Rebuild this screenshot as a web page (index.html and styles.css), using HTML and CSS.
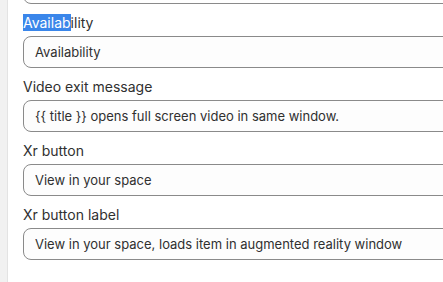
FILE: index.html
```html
<!DOCTYPE html>
<html lang="en">

<head>
    <meta charset="UTF-8">
    <title>Metafields</title>

    <link rel="stylesheet" href="styles.css">
</head>

<body>

    <div class="side"></div>

    <main class="felter">
        <div class="felt forrige">
            <input class="inp" type="text" value="">
        </div>

        <div class="felt">
            <label><span class="valgt">Availab</span>ility</label>
            <input class="inp" type="text" value="Availability">
        </div>

        <div class="felt">
            <label>Video exit message</label>
            <input class="inp" type="text" value="{{ title }} opens full screen video in same window.">
        </div>

        <div class="felt">
            <label>Xr button</label>
            <input class="inp" type="text" value="View in your space">
        </div>

        <div class="felt">
            <label>Xr button label</label>
            <input class="inp" type="text" value="View in your space, loads item in augmented reality window">
        </div>
    </main>

</body>

</html>
```

FILE: styles.css
```css
html,
body {
    margin: 0;
    height: 100%;
    overflow: hidden;
    background-color: #fff;
}

body {
    display: flex;
    font-family: Inter, "Noto Sans", sans-serif;
    font-size: 14px;
    color: #303030;
}

.side {
    flex: 0 0 7px;
    background-color: #f1f1f1;
    border-right: 1px solid #e3e3e3;
}

.felter {
    flex: 0 0 520px;
    padding-left: 15px;
    margin-top: -28px;
    display: flex;
    flex-direction: column;
    gap: 8px;
}

.felt {
    display: flex;
    flex-direction: column;
    gap: 4px;
}

.felt label {
    line-height: 20px;
    height: 20px;
    padding-top: 1px;
    margin-bottom: -1px;
}

.valgt {
    background-color: #3a86ea;
    color: #fff;
}

.inp {
    box-sizing: border-box;
    height: 32px;
    width: 100%;
    margin: 0;
    padding: 0 11px;
    border: 1px solid #8a8a8a;
    border-radius: 8px;
    background-color: #fdfdfd;
    font-family: Inter, "Noto Sans", sans-serif;
    font-size: 13px;
    color: #303030;
    outline: none;
}

.forrige .inp {
    background-color: #fff;
}
```
